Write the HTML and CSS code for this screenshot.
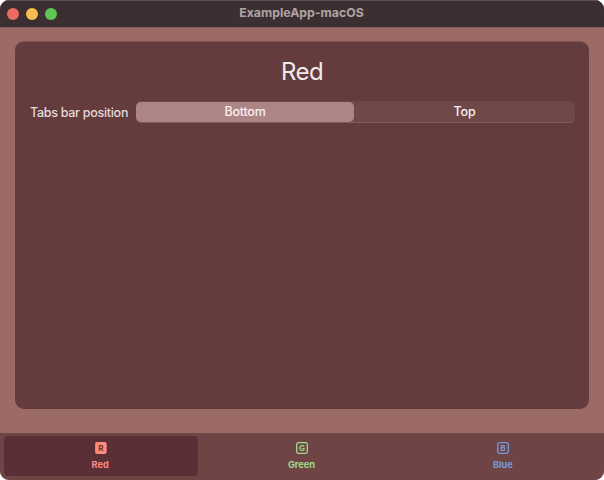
FILE: index.html
```html
<!DOCTYPE html>
<html lang="en">
<head>
<meta charset="utf-8">
<title>ExampleApp-macOS</title>
<link rel="stylesheet" href="styles.css">
</head>
<body>
<div class="window">
  <header class="titlebar">
    <div class="lights"><i class="light close"></i><i class="light minimize"></i><i class="light expand"></i></div>
    <div class="title"><span>ExampleApp-macOS</span></div>
  </header>
  <main class="content">
    <section class="panel">
      <h1><span>Red</span></h1>
      <div class="picker">
        <span class="label"><span>Tabs bar position</span></span>
        <div class="segments">
          <button class="segment active"><span>Bottom</span></button>
          <button class="segment"><span>Top</span></button>
        </div>
      </div>
    </section>
  </main>
  <nav class="tabs">
    <button class="tab red selected">
      <svg width="12" height="12" viewBox="0 0 12 12"><rect x="0.1" y="0.1" width="11.6" height="11.8" rx="1.8" fill="currentColor"/><text class="glyph dark" x="6" y="8.8">R</text></svg>
      <span>Red</span>
    </button>
    <button class="tab green">
      <svg width="12" height="12" viewBox="0 0 12 12"><rect x="0.7" y="0.7" width="10.6" height="10.6" rx="1.7" fill="none" stroke="currentColor" stroke-width="1.3"/><text class="glyph" x="6" y="8.8">G</text></svg>
      <span>Green</span>
    </button>
    <button class="tab blue">
      <svg width="12" height="12" viewBox="0 0 12 12"><rect x="0.7" y="0.7" width="10.6" height="10.6" rx="1.7" fill="none" stroke="currentColor" stroke-width="1.3"/><text class="glyph" x="6" y="8.8">B</text></svg>
      <span>Blue</span>
    </button>
  </nav>
</div>
</body>
</html>
```
FILE: styles.css
```css
* { box-sizing: border-box; }
body { margin: 0; background: #fff; font-family: Inter, "Liberation Sans", sans-serif; }
button { border: 0; padding: 0; margin: 0; background: none; font: inherit; color: inherit; }
.window {
  width: 604px; height: 480px; display: flex; flex-direction: column;
  overflow: hidden; border-radius: 9px; background: #9c6b66;
}
.titlebar {
  height: 27px; flex: none; display: grid; grid-template-columns: 100px 1fr 100px;
  align-items: center; background: #3b2f31; border-top: 1px solid #5b4f51;
}
.lights { display: flex; gap: 7px; padding-left: 7px; }
.light { width: 12px; height: 12px; border-radius: 50%; }
.close { background: #ed6a5f; }
.minimize { background: #f5be4f; }
.expand { background: #61c554; }
.title { text-align: center; font-size: 12.3px; line-height: 22px; font-weight: 700; color: #b0a4a6; padding: 0 1px 2px 0; }
.content { flex: 1; padding: 13px 15px 24px; border-top: 1px solid #835b59; display: flex; }
.panel {
  flex: 1; border-radius: 9px; background: #643c3d; padding: 14px 14px 0 15px;
  border-top: 1px solid #7e5250;
}
h1 { margin: 0; text-align: center; font-size: 24px; line-height: 32px; font-weight: 400; color: #f0e9e9; letter-spacing: -0.6px; padding-right: 1px; }
.picker { display: flex; margin-top: 13px; align-items: center; }
.label { width: 106px; flex: none; font-size: 12.5px; line-height: 20px; padding-top: 2px; font-weight: 500; letter-spacing: -0.28px; color: #e5dada; white-space: nowrap; }
.segments {
  flex: 1; height: 22px; display: grid; grid-template-columns: 218px 1fr; border-radius: 5px;
  background: #714849; border-bottom: 1px solid #835b5c;
}
.segment { font-size: 12.5px; line-height: 21px; font-weight: 500; letter-spacing: -0.2px; color: #f8f1f1; border-radius: 5px; }
.segment.active { background: #ae8586; margin-top: 1px; line-height: 20px; }
.tabs { height: 47px; flex: none; display: grid; grid-template-columns: repeat(3, 1fr); background: #6f4445; padding: 3px 0 4px; }
.tab {
  margin: 0 3.5px 0 4px; padding: 6px 1.5px 0 0; border-radius: 4px; display: flex; flex-direction: column;
  align-items: center; font-size: 9.2px; font-weight: 700; line-height: 12px; gap: 5px;
}
.tab svg { flex: none; display: block; margin-left: 1px; }
.selected { background: #5a3036; }
.red { color: #ff897c; }
.green { color: #9cdc8b; }
.blue { color: #7899dc; }
.glyph { font-size: 8px; font-weight: 700; text-anchor: middle; fill: currentColor; }
.glyph.dark { fill: #6a3038; }
```
